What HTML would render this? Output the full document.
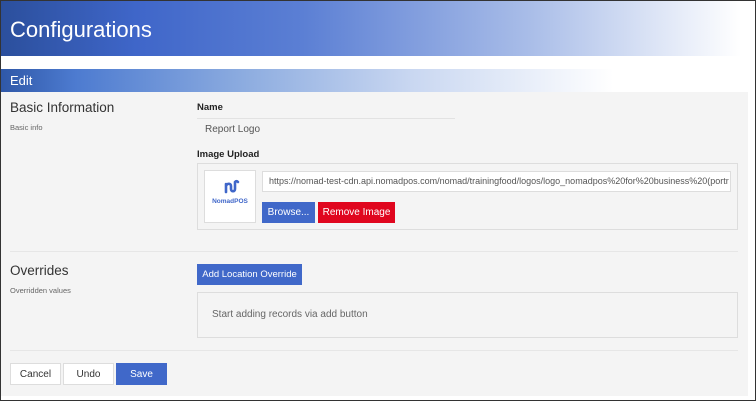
<!DOCTYPE html>
<html><head><meta charset="utf-8"><style>
*{box-sizing:border-box;margin:0;padding:0}
body{width:756px;height:401px;overflow:hidden;background:#fff;font-family:"Liberation Sans",Arial,sans-serif;position:relative}
.frame{position:absolute;left:0;top:0;width:756px;height:401px;border:1px solid #333;z-index:10;pointer-events:none}
.hdr{position:absolute;left:0;top:0;width:756px;height:56px;background:linear-gradient(to right,#2b4f9c 0%,#3f66c9 18%,#5b7fd4 40%,#a9bde8 70%,#fff 98%)}
.hdr span{position:absolute;left:10px;top:17px;font-size:22px;color:#fff}
.edit{position:absolute;left:1px;top:69px;width:747px;height:23px;background:linear-gradient(to right,#2f58a8 0%,#4d7bd0 10%,#8eade0 33%,#c9d7f1 55%,#fff 82%)}
.edit span{position:absolute;left:9px;top:4px;font-size:13px;color:#fff}
.panel{position:absolute;left:1px;top:92px;width:747px;height:304px;background:#f4f4f4}
.a{position:absolute}
.h{font-size:13.5px;color:#333}
.s{font-size:7.5px;color:#666}
.lbl{font-size:9.5px;font-weight:bold;color:#222}
.btn{position:absolute;font-size:10px;display:flex;align-items:center;justify-content:center;color:#fff;white-space:nowrap}
</style></head><body>
<div class="hdr"><span>Configurations</span></div>
<div class="edit"><span>Edit</span></div>
<div class="panel"></div>
<div class="a h" style="left:10px;top:100px">Basic Information</div>
<div class="a s" style="left:10px;top:123px">Basic info</div>
<div class="a lbl" style="left:197px;top:102px">Name</div>
<div class="a" style="left:197px;top:118px;width:258px;height:1px;background:#e2e2e2"></div>
<div class="a" style="left:205px;top:124px;font-size:10px;color:#555">Report Logo</div>
<div class="a lbl" style="left:197px;top:149px">Image Upload</div>
<div class="a" style="left:197px;top:163px;width:541px;height:67px;border:1px solid #ddd"></div>
<div class="a" style="left:204px;top:170px;width:52px;height:53px;background:#fff;border:1px solid #ddd">
<svg width="50" height="51" viewBox="0 0 50 51" style="position:absolute;left:0;top:0"><path d="M21 21v-8M21 15c1-3 5-3 5 0v3c0 3 4 3 4 0v-7M30 11c1-1 2-1 3 0" fill="none" stroke="#3f66c9" stroke-width="2.6" stroke-linecap="round"/></svg>
<div style="position:absolute;left:0;top:27px;width:50px;text-align:center;font-size:6.5px;font-weight:bold;color:#3f66c9">NomadPOS</div></div>
<div class="a" style="left:262px;top:171px;width:469px;height:21px;background:#fff;border:1px solid #ddd;font-size:9px;color:#555;padding:4px 6px;white-space:nowrap;overflow:hidden">https://nomad-test-cdn.api.nomadpos.com/nomad/trainingfood/logos/logo_nomadpos%20for%20business%20(portr</div>
<div class="btn" style="left:262px;top:202px;width:53px;height:21px;background:#4068c9">Browse...</div>
<div class="btn" style="left:318px;top:202px;width:77px;height:21px;background:#e0061e">Remove Image</div>
<div class="a" style="left:10px;top:251px;width:728px;height:1px;background:#e6e6e6"></div>
<div class="a h" style="left:10px;top:263px">Overrides</div>
<div class="a s" style="left:10px;top:286px">Overridden values</div>
<div class="btn" style="left:197px;top:264px;width:105px;height:21px;background:#4068c9;font-size:9.5px">Add Location Override</div>
<div class="a" style="left:197px;top:292px;width:541px;height:46px;border:1px solid #ddd"></div>
<div class="a" style="left:212px;top:309px;font-size:10px;color:#666">Start adding records via add button</div>
<div class="a" style="left:10px;top:350px;width:728px;height:1px;background:#e6e6e6"></div>
<div class="btn" style="left:10px;top:363px;width:51px;height:22px;background:#fff;border:1px solid #ddd;color:#333">Cancel</div>
<div class="btn" style="left:63px;top:363px;width:51px;height:22px;background:#fff;border:1px solid #ddd;color:#333">Undo</div>
<div class="btn" style="left:116px;top:363px;width:51px;height:22px;background:#4068c9">Save</div>
<div class="frame"></div>
</body></html>
